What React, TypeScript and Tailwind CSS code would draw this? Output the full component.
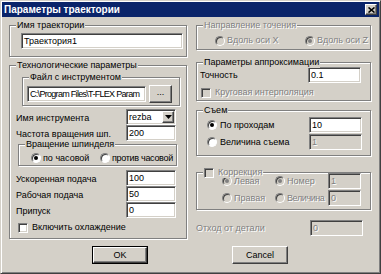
import React from 'react';

const sunken =
  'border border-t-[#808080] border-l-[#808080] border-r-white border-b-white shadow-[inset_1px_1px_0_#404040,inset_-1px_-1px_0_#d4d0c8]';
const raised =
  'border border-t-white border-l-white border-r-[#404040] border-b-[#404040] shadow-[inset_-1px_-1px_0_#808080,inset_1px_1px_0_#d4d0c8]';
const grayText = 'text-[#808080] [text-shadow:1px_1px_0_#fff]';

function Group({
  label,
  className = '',
  children,
}: {
  label: React.ReactNode;
  className?: string;
  children?: React.ReactNode;
}) {
  return (
    <div className={`relative border border-[#808080] shadow-[inset_1px_1px_0_#fff,1px_1px_0_#fff] ${className}`}>
      <div className="absolute left-[6px] -top-[6px] bg-[#d4d0c8] px-[1px] leading-[11px] flex items-center">
        {label}
      </div>
      {children}
    </div>
  );
}

function Edit({ value, className = '', disabled }: { value: string; className?: string; disabled?: boolean }) {
  return (
    <div
      className={`h-[16px] ${sunken} ${disabled ? 'bg-[#d4d0c8] ' + grayText : 'bg-white'} flex items-center pl-[2px] overflow-hidden shrink-0 ${className}`}
    >
      {value}
    </div>
  );
}

function Radio({ checked, disabled }: { checked?: boolean; disabled?: boolean }) {
  return (
    <span
      className={`w-[10px] h-[10px] rounded-full border border-t-[#808080] border-l-[#808080] border-r-white border-b-white shadow-[inset_1px_1px_0_#404040] ${disabled ? 'bg-[#d4d0c8]' : 'bg-white'} flex items-center justify-center shrink-0`}
    >
      {checked && <span className={`w-[4px] h-[4px] rounded-full ${disabled ? 'bg-[#808080]' : 'bg-black'}`} />}
    </span>
  );
}

function Check({ disabled }: { disabled?: boolean }) {
  return <span className={`w-[10px] h-[10px] ${sunken} ${disabled ? 'bg-[#d4d0c8]' : 'bg-white'} shrink-0`} />;
}

function Row({ label, children, className = '' }: { label: string; children: React.ReactNode; className?: string }) {
  return (
    <div className={`flex items-center h-[16px] pl-[6px] ${className}`}>
      <span className="w-[110px] pt-[2px]">{label}</span>
      {children}
    </div>
  );
}

export default function App() {
  return (
    <div className="w-[381px] h-[274px] bg-[#d4d0c8] border border-t-[#d4d0c8] border-l-[#d4d0c8] border-r-[#404040] border-b-[#404040] shadow-[inset_1px_1px_0_#fff,inset_-1px_-1px_0_#808080] flex flex-col font-['Liberation_Sans',Arial,sans-serif] text-[9px] text-black leading-[11px] whitespace-nowrap overflow-hidden">
      {/* title bar */}
      <div className="mx-[1px] mt-[1px] h-[15px] bg-[#0a246a] flex items-center justify-between pl-[2px] pr-[2px]">
        <span className="text-white font-bold text-[10px]">Параметры траектории</span>
        <span className={`w-[12px] h-[11px] bg-[#d4d0c8] ${raised} flex items-center justify-center`}>
          <svg width="7" height="6" viewBox="0 0 7 6">
            <path d="M0.5 0.5 L6.5 5.5 M6.5 0.5 L0.5 5.5" stroke="black" strokeWidth="1.6" />
          </svg>
        </span>
      </div>

      <div className="flex pl-[8px] items-start">
        {/* left column */}
        <div className="w-[178px] flex flex-col">
          <Group label="Имя траектории" className="mt-[8px] h-[32px] pt-[7px] pl-[11px] pr-[3px]">
            <Edit value="Траектория1" className="w-full" />
          </Group>

          <Group label="Технологические параметры" className="mt-[8px] h-[174px] flex flex-col">
            <Group
              label="Файл с инструментом"
              className="mt-[11px] ml-[12px] mr-[6px] h-[29px] pl-[4px] pt-[5px] flex items-center gap-[3px] self-stretch"
            >
              <Edit value={'C:\\Program Files\\T-FLEX Param'} className="w-[119px] tracking-[-0.7px]" />
              <button className={`w-[23px] h-[18px] ${raised} bg-[#d4d0c8] text-[9px] leading-[9px] pb-[3px]`}>...</button>
            </Group>

            <Row label="Имя инструмента" className="mt-[3px]">
              <div className={`w-[50px] h-[16px] ${sunken} bg-white flex items-center justify-between pl-[2px] pr-[1px]`}>
                <span>rezba</span>
                <span className={`w-[12px] h-[12px] bg-[#d4d0c8] ${raised} flex items-center justify-center`}>
                  <svg width="7" height="4" viewBox="0 0 7 4">
                    <path d="M0 0 H7 L3.5 4 Z" fill="black" />
                  </svg>
                </span>
              </div>
            </Row>
            <Row label="Частота вращения шп.">
              <Edit value="200" className="w-[50px]" />
            </Row>

            <Group label="Вращение шпинделя" className="mt-[3px] ml-[8px] w-[159px] h-[22px] pt-[6px] pl-[12px] flex items-center">
              <div className="flex items-center gap-[2px] w-[69px]">
                <Radio checked />
                <span>по часовой</span>
              </div>
              <div className="flex items-center gap-[2px]">
                <Radio />
                <span className="tracking-[-0.3px]">против часовой</span>
              </div>
            </Group>

            <Row label="Ускоренная подача" className="mt-[4px]">
              <Edit value="100" className="w-[50px]" />
            </Row>
            <Row label="Рабочая подача">
              <Edit value="50" className="w-[50px]" />
            </Row>
            <Row label="Припуск">
              <Edit value="0" className="w-[50px]" />
            </Row>
            <div className="mt-[4px] pl-[8px] flex items-center gap-[4px]">
              <Check />
              <span>Включить охлаждение</span>
            </div>
          </Group>
        </div>

        {/* right column */}
        <div className="w-[175px] ml-[9px] flex flex-col">
          <Group
            label={<span className={grayText}>Направление точения</span>}
            className="mt-[8px] h-[25px] pt-[9px] pl-[18px] flex items-start"
          >
            <div className="flex items-center gap-[2px] w-[90px]">
              <Radio disabled />
              <span className={grayText}>Вдоль оси X</span>
            </div>
            <div className="flex items-center gap-[2px]">
              <Radio checked disabled />
              <span className={grayText}>Вдоль оси Z</span>
            </div>
          </Group>

          <Group label="Параметры аппроксимации" className="mt-[12px] h-[39px] pt-[4px] flex flex-col">
            <div className="flex items-center">
              <span className="w-[111px] pl-[3px]">Точность</span>
              <Edit value="0.1" className="w-[53px]" />
            </div>
            <div className="mt-[4px] pl-[4px] flex items-center gap-[4px]">
              <Check disabled />
              <span className={grayText}>Круговая интерполяция</span>
            </div>
          </Group>

          <Group label="Съем" className="mt-[9px] h-[46px] pt-[6px] flex flex-col">
            <div className="flex items-center">
              <div className="w-[112px] pl-[10px] flex items-center gap-[3px]">
                <Radio checked />
                <span>По проходам</span>
              </div>
              <Edit value="10" className="w-[53px]" />
            </div>
            <div className="flex items-center mt-[1px]">
              <div className="w-[112px] pl-[10px] flex items-center gap-[3px]">
                <Radio />
                <span>Величина съема</span>
              </div>
              <Edit value="1" className="w-[53px]" disabled />
            </div>
          </Group>

          <Group
            label={
              <span className="flex items-center gap-[4px]">
                <Check disabled />
                <span className={grayText}>Коррекция</span>
              </span>
            }
            className="mt-[16px] h-[38px] flex flex-col"
          >
            <div className="flex items-center">
              <div className="w-[78px] pl-[25px] flex items-center gap-[2px]">
                <Radio checked disabled />
                <span className={grayText}>Левая</span>
              </div>
              <div className="w-[53px] flex items-center gap-[2px]">
                <Radio checked disabled />
                <span className={grayText}>Номер</span>
              </div>
              <Edit value="1" className="w-[33px]" disabled />
            </div>
            <div className="flex items-center mt-[1px]">
              <div className="w-[78px] pl-[25px] flex items-center gap-[2px]">
                <Radio disabled />
                <span className={grayText}>Правая</span>
              </div>
              <div className="w-[53px] flex items-center gap-[2px]">
                <Radio disabled />
                <span className={`${grayText} tracking-[-0.4px]`}>Величина</span>
              </div>
              <Edit value="0" className="w-[33px]" disabled />
            </div>
          </Group>

          <div className="mt-[10px] flex items-center">
            <span className={`w-[114px] ${grayText}`}>Отход от детали</span>
            <Edit value="0" className="w-[53px]" disabled />
          </div>
        </div>
      </div>

      {/* buttons */}
      <div className="flex mt-[7px] pl-[91px]">
        <div className="border border-black">
          <button className={`w-[54px] h-[16px] ${raised} bg-[#d4d0c8] text-[9px]`}>OK</button>
        </div>
        <button className={`ml-[84px] w-[56px] h-[18px] ${raised} bg-[#d4d0c8] text-[9px]`}>Cancel</button>
      </div>
    </div>
  );
}
